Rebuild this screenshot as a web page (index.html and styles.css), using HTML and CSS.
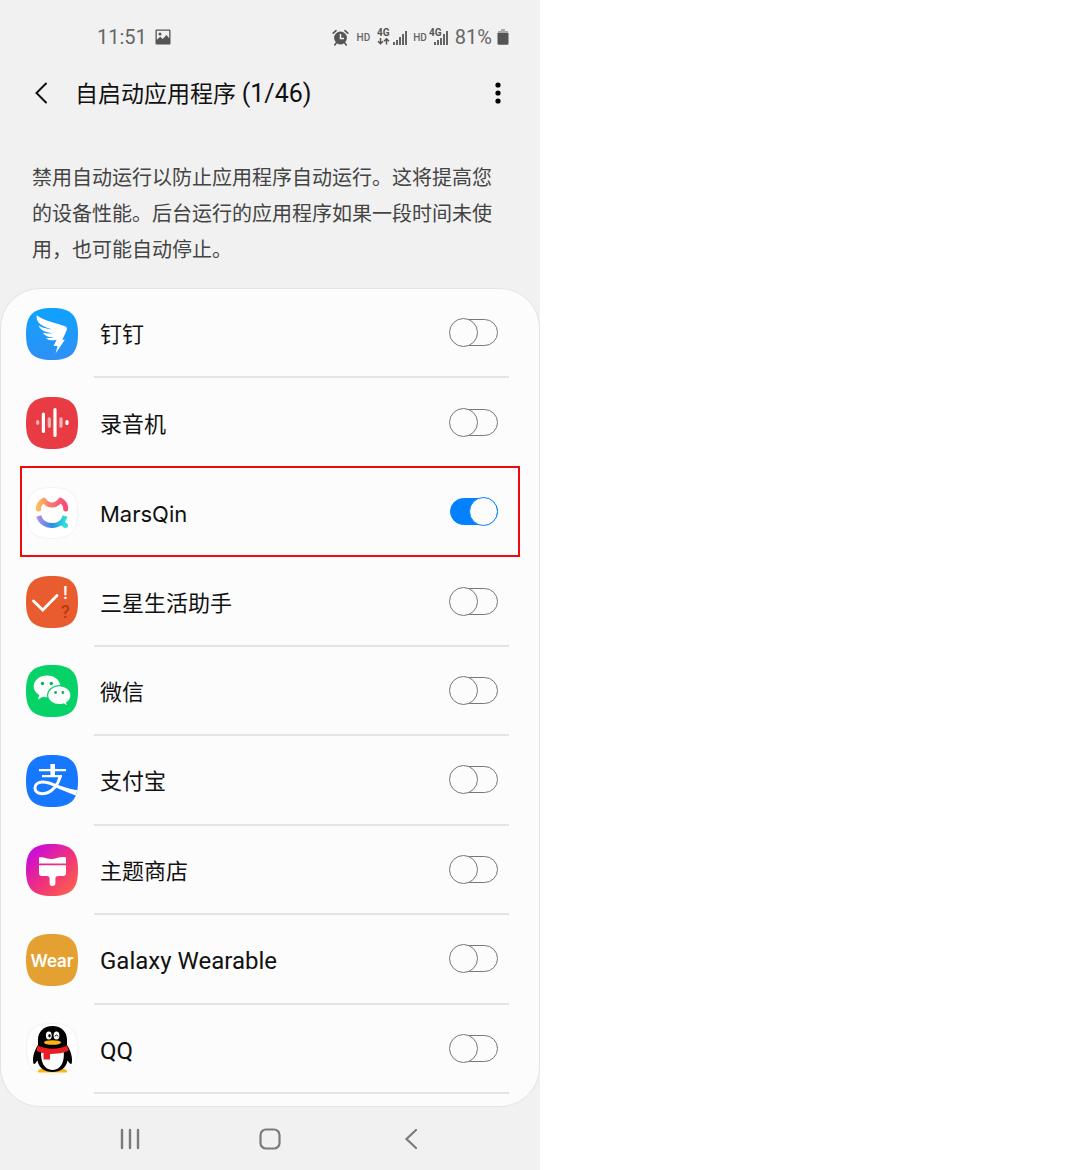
FILE: index.html
```
<!DOCTYPE html>
<html lang="zh-CN">
<head>
    <meta charset="UTF-8">
    <meta name="viewport" content="width=device-width, initial-scale=1.0">
    <title>自启动应用程序</title>
    <link rel="stylesheet" href="styles.css">
</head>
<body>
    <div class="phone">
        <div class="status">
            <span class="time">11:51</span>
            <svg class="picture" width="16" height="16" viewBox="0 0 16 16">
                <path fill="#555" fill-rule="evenodd" d="M1.5 0.5h13a1 1 0 0 1 1 1v13a1 1 0 0 1-1 1h-13a1 1 0 0 1-1-1v-13a1 1 0 0 1 1-1zM1.8 1.8v9l3.4-3 2.6 2.2 3.6-4 2.8 3.2V1.8z"/>
                <circle cx="5" cy="5" r="1.5" fill="#555"/>
            </svg>
            <div class="signals">
                <svg width="17" height="17" viewBox="0 0 17 17">
                    <circle cx="8.5" cy="9" r="6.4" fill="#555"/>
                    <path fill="none" stroke="#555" stroke-width="1.6" stroke-linecap="round" d="M1.2 4.2L4 1.6M13 1.6l2.8 2.6M4.2 14l-1.4 2M12.8 14l1.4 2"/>
                    <path fill="none" stroke="#f1f1f1" stroke-width="1.5" d="M8.5 5v4.4H12"/>
                </svg>
                <span class="hd">HD</span>
                <svg class="network" width="32" height="18" viewBox="0 0 32 18">
                    <text class="net" x="0" y="8">4G</text>
                    <path fill="none" stroke="#555" stroke-width="1.5" d="M3.5 10v5.5M1 13.2l2.5 2.5L6 13.2M9.5 16.5V11M7 13.2l2.5-2.5 2.5 2.5"/>
                    <path stroke="#555" stroke-width="1.8" d="M17 17v-3M20 17v-5M23 17v-8M26 17V6M29 17V3"/>
                </svg>
                <span class="hd">HD</span>
                <svg class="network" width="22" height="18" viewBox="0 0 22 18">
                    <text class="net" x="0" y="8">4G</text>
                    <path stroke="#555" stroke-width="1.8" d="M6 17v-3M9 17v-5M12 17v-7M15 17V6M18 17V3"/>
                </svg>
                <span class="percent">81%</span>
                <svg class="battery" width="12" height="16" viewBox="0 0 12 16">
                    <path fill="#aaa" d="M4 0h4v2h3v3H1V2h3z"/>
                    <path fill="#555" d="M0.5 4h11v10.5a1.3 1.3 0 0 1-1.3 1.3H1.8a1.3 1.3 0 0 1-1.3-1.3z"/>
                </svg>
            </div>
        </div>

        <header class="header">
            <button class="icon-button" aria-label="返回">
                <svg width="16" height="22" viewBox="0 0 16 22"><path fill="none" stroke="#111" stroke-width="2" stroke-linecap="round" d="M13 1.5L3.5 11l9.5 9.5"/></svg>
            </button>
            <h1>自启动应用程序 <span class="count">(1/46)</span></h1>
            <button class="icon-button" aria-label="更多选项">
                <svg width="16" height="22" viewBox="0 0 16 22"><circle cx="8" cy="3" r="2.6"/><circle cx="8" cy="11" r="2.6"/><circle cx="8" cy="19" r="2.6"/></svg>
            </button>
        </header>

        <p class="description">禁用自动运行以防止应用程序自动运行。这将提高您的设备性能。后台运行的应用程序如果一段时间未使用，也可能自动停止。</p>

        <ul class="apps">
            <li class="app">
                <svg class="logo" viewBox="0 0 52 52">
                    <defs><linearGradient id="ding" x2="0" y2="1"><stop stop-color="#0ea3ff"/><stop offset="1" stop-color="#2f8ff5"/></linearGradient></defs>
                    <path fill="url(#ding)" d="M26 0C45 0 52 7 52 26S45 52 26 52 0 45 0 26 7 0 26 0z"/>
                    <path fill="#fff" d="M10.700 7.200C18 13 31 15 39.500 18.500c1.600.7 1.800 2 1.200 3.500C39.800 24.500 38 28 36.300 31.800h2.500L29.600 45.500l2-7.500h-4l3-6.300c-4 1.100-8 1-10.800-1.600 2.500.2 5.500-.1 7.600-1-5 0-8.400-.8-10.600-4.600 3 1 7 1.300 9.900.8C20 24 14.500 22.500 12.600 17.400c4 2.600 9.400 3.600 14 4C18.500 18.700 9.600 16.500 10.700 7.200z"/>
                </svg>
                <div class="body"><label for="ding-switch">钉钉</label><input class="switch" type="checkbox" id="ding-switch"></div>
            </li>
            <li class="app">
                <svg class="logo" viewBox="0 0 52 52">
                    <path fill="#e93b43" d="M26 0C45 0 52 7 52 26S45 52 26 52 0 45 0 26 7 0 26 0z"/>
                    <g stroke="#fff" stroke-width="3.200" stroke-linecap="round">
                        <path d="M17.400 17v17.500M29 12.500v26M41 24.500v2"/>
                        <path stroke="#f8b4b7" d="M11.700 24.700v1.500M23.300 21.800v7.400M35 21.800v7.400"/>
                    </g>
                </svg>
                <div class="body"><label for="recorder-switch">录音机</label><input class="switch" type="checkbox" id="recorder-switch"></div>
            </li>
            <li class="app highlighted">
                <svg class="logo" viewBox="0 0 52 52">
                    <defs>
                        <linearGradient id="mars-top"><stop stop-color="#fdb95c"/><stop offset=".5" stop-color="#fb7077"/><stop offset="1" stop-color="#fa4a78"/></linearGradient>
                        <linearGradient id="mars-bottom"><stop stop-color="#a78bec"/><stop offset=".5" stop-color="#2c8fe0"/><stop offset="1" stop-color="#2cdfd8"/></linearGradient>
                    </defs>
                    <path fill="#fff" stroke="#f3f3f3" d="M26 .5C44.500 .5 51.500 7.500 51.500 26S44.500 51.500 26 51.500 .5 44.500 .5 26 7.500 .5 26 .5z"/>
                    <path fill="none" stroke="url(#mars-top)" stroke-width="5" stroke-linecap="round" stroke-linejoin="round" d="M12.500 22c0-4 2-7 5.300-8.800 2.500 3.500 4.700 4.800 8.200 4.800s5.700-1.300 8.400-4.800c3.300 1.800 5.300 4.800 5.300 8.800"/>
                    <path fill="none" stroke="url(#mars-bottom)" stroke-width="5" d="M12.800 29C14.500 35 19.500 38.500 26 38.500s11.500-3.500 13-9.500M34 34l5.500 4.500"/>
                    <circle cx="39.500" cy="38.500" r="2.500" fill="#2cdfd8"/>
                </svg>
                <div class="body"><label class="inter" for="mars-switch">MarsQin</label><input class="switch" type="checkbox" id="mars-switch" checked></div>
            </li>
            <li class="app">
                <svg class="logo" viewBox="0 0 52 52">
                    <path fill="#e95c2f" d="M26 0C45 0 52 7 52 26S45 52 26 52 0 45 0 26 7 0 26 0z"/>
                    <path fill="none" stroke="#fff" stroke-width="2.800" stroke-linecap="round" d="M7.500 25l9.300 9L31 19.500"/>
                    <text class="mark" x="37" y="23">!</text>
                    <text class="mark dark" x="35" y="42">?</text>
                </svg>
                <div class="body"><label for="life-switch">三星生活助手</label><input class="switch" type="checkbox" id="life-switch"></div>
            </li>
            <li class="app">
                <svg class="logo" viewBox="0 0 52 52">
                    <path fill="#07d267" d="M26 0C45 0 52 7 52 26S45 52 26 52 0 45 0 26 7 0 26 0z"/>
                    <path fill="#fff" d="M21 10.500c7.500 0 13.400 4.800 13.400 11S28.500 32.300 21 32.300c-1.500 0-2.900-.2-4.200-.6L12 34.500l1.200-4.500C9.700 28 7.700 25 7.700 21.500c0-6.200 5.800-11 13.300-11z"/>
                    <path fill="#fff" stroke="#07d267" stroke-width="1.200" d="M33.300 20.700c6.500 0 11.700 4.200 11.700 9.600 0 3-1.700 5.700-4.300 7.400l1 3.500-4.200-2.200c-1.300.4-2.700.6-4.200.6-6.500 0-11.700-4-11.700-9.300s5.200-9.600 11.700-9.600z"/>
                    <g fill="#07b659"><circle cx="16.500" cy="18.500" r="1.700"/><circle cx="25.300" cy="18.500" r="1.700"/><circle cx="29.600" cy="27.500" r="1.400"/><circle cx="36.900" cy="27.500" r="1.400"/></g>
                </svg>
                <div class="body"><label for="wechat-switch">微信</label><input class="switch" type="checkbox" id="wechat-switch"></div>
            </li>
            <li class="app">
                <svg class="logo" viewBox="0 0 52 52">
                    <path fill="#1677ff" d="M26 0C45 0 52 7 52 26S45 52 26 52 0 45 0 26 7 0 26 0z"/>
                    <path fill="none" stroke="#fff" stroke-width="2.200" d="M13 15.200h27M16 21.200h20"/>
                    <path fill="none" stroke="#fff" stroke-width="4.600" d="M26.700 9v12"/>
                    <path fill="none" stroke="#fff" stroke-width="3" d="M34.500 20.500C32.500 29 26 38.500 16.500 38.700 6.500 38.900 6.500 27.500 16 27c7-.3 14 4 19 6"/>
                    <path fill="#fff" d="M25 28.500c8 1.500 16 5 26.300 6.800-.3 2-.9 3.700-1.700 5.200C41 37.500 33 33.500 25 30z"/>
                </svg>
                <div class="body"><label for="alipay-switch">支付宝</label><input class="switch" type="checkbox" id="alipay-switch"></div>
            </li>
            <li class="app">
                <svg class="logo" viewBox="0 0 52 52">
                    <defs><linearGradient id="theme" x1="0" y1=".2" x2=".8" y2="1"><stop stop-color="#c80ae0"/><stop offset=".55" stop-color="#f0327a"/><stop offset="1" stop-color="#fd5f50"/></linearGradient></defs>
                    <path fill="url(#theme)" d="M26 0C45 0 52 7 52 26S45 52 26 52 0 45 0 26 7 0 26 0z"/>
                    <path fill="#fff" d="M13 13.500c5-1.200 8 2 13.500 1.500 5-.5 8-2.800 13.500-1.500v6H13z"/>
                    <path fill="#fff" d="M13 21.200h27V29a3 3 0 0 1-3 3h-5c-1.500 0-2.600 1-2.600 2.500V39a2.900 2.900 0 0 1-5.800 0v-4.500C23.600 33 22.500 32 21 32h-5a3 3 0 0 1-3-3z"/>
                </svg>
                <div class="body"><label for="theme-switch">主题商店</label><input class="switch" type="checkbox" id="theme-switch"></div>
            </li>
            <li class="app">
                <svg class="logo" viewBox="0 0 52 52">
                    <path fill="#e5a032" d="M26 0C45 0 52 7 52 26S45 52 26 52 0 45 0 26 7 0 26 0z"/>
                    <text class="wear" x="26" y="33" text-anchor="middle">Wear</text>
                </svg>
                <div class="body"><label class="latin" for="wear-switch">Galaxy Wearable</label><input class="switch" type="checkbox" id="wear-switch"></div>
            </li>
            <li class="app">
                <svg class="logo" viewBox="0 0 52 52">
                    <path fill="#fff" stroke="#f3f3f3" d="M26 .5C44.500 .5 51.500 7.500 51.500 26S44.500 51.500 26 51.500 .5 44.500 .5 26 7.500 .5 26 .5z"/>
                    <path fill="#fdb515" d="M12 48.500c0-2.300 4-3.300 8-3.300h13c4 0 8 1 8 3.300 0 .7-.8 1-2 1H14c-1.200 0-2-.3-2-1z"/>
                    <path d="M26.500 3C35.500 3 41 9 41 16.500V22c3.500 5 6 13 4.700 18.500-.8 1.200-2.500-.5-4.200-3C40.500 44.500 34.500 49 26.500 49s-14-4.500-15-11.500c-1.700 2.500-3.200 4.200-4.100 3C6 35 8.500 27 12 22v-5.500C12 9 17.500 3 26.500 3z"/>
                    <path fill="#fff" d="M15.500 27h22c1.700 11-2.500 20-11 20s-12.700-9-11-20z"/>
                    <path fill="#ea1c24" d="M12 22.500c8 4.200 21 4.200 29 0l1.700 5c-5 2.600-11.700 3.400-18.700 3.400V36.500h-6.500v-6.400c-2.500-.5-5-1.300-7.200-2.600z"/>
                    <ellipse cx="22.800" cy="12.500" rx="2.900" ry="3.900" fill="#fff"/><ellipse cx="30.500" cy="12.500" rx="2.900" ry="3.900" fill="#fff"/>
                    <ellipse cx="23.500" cy="12.700" rx="1.200" ry="1.800"/><path fill="none" stroke="#000" d="M29 13.500c.5-2 2.300-2 3 0"/>
                    <ellipse cx="26.500" cy="19.500" rx="8.500" ry="2.300" fill="#fdb515"/>
                </svg>
                <div class="body"><label class="latin" for="qq-switch">QQ</label><input class="switch" type="checkbox" id="qq-switch"></div>
            </li>
        </ul>

        <nav class="nav">
            <button class="icon-button" aria-label="最近"><svg width="22" height="22" viewBox="0 0 22 22"><path stroke="#7b7b7b" stroke-width="2.400" stroke-linecap="round" d="M3 2v18M11 2v18M19 2v18"/></svg></button>
            <button class="icon-button" aria-label="主页"><svg width="22" height="22" viewBox="0 0 22 22"><rect x="1.500" y="1.500" width="19" height="19" rx="5.500" fill="none" stroke="#7b7b7b" stroke-width="2.200"/></svg></button>
            <button class="icon-button" aria-label="返回上一页"><svg width="22" height="22" viewBox="0 0 22 22"><path fill="none" stroke="#7b7b7b" stroke-width="2.200" stroke-linecap="round" d="M17 2L7.500 11l9.500 9"/></svg></button>
        </nav>
    </div>
</body>
</html>
```
FILE: styles.css
```
*,
*::before,
*::after{
    box-sizing: border-box;
}
body{
    margin: 0;
    background-color: #fff;
    font-family: Roboto, "Noto Sans CJK SC", sans-serif;
    color: #111;
}
svg{
    display: block;
    flex-shrink: 0;
}
.phone{
    display: flex;
    flex-direction: column;
    width: 50%;
    max-width: 540px;
    min-height: 100vh;
    background-color: #f1f1f1;
}

/* status bar */
.status{
    display: flex;
    align-items: center;
    height: 74px;
    padding: 0 31px 0 97px;
    color: #666;
    font-size: 20px;
}
.picture{
    margin-left: 8px;
}
.signals{
    display: flex;
    align-items: center;
    margin-left: auto;
}
.hd{
    margin: 0 7px 0 8px;
    font-size: 10px;
    font-weight: 500;
}
.signals .hd + .network + .hd{
    margin: 0 2px 0 4px;
}
.net{
    font-size: 10px;
    font-weight: 700;
    fill: #555;
}
.percent{
    margin-left: 4px;
}
.battery{
    margin-left: 5px;
}

.icon-button{
    display: flex;
    align-items: center;
    justify-content: center;
    padding: 0;
    border: none;
    background: none;
    cursor: pointer;
}

/* title */
.header{
    display: flex;
    align-items: center;
    height: 38px;
    padding: 0 34px 0 33px;
}
h1{
    flex: 1;
    margin: 0 0 0 26px;
    padding-top: 2px;
    font-size: 23px;
    font-weight: 400;
    line-height: 36px;
}
.count{
    font-size: 25px;
}
.description{
    margin: 0;
    padding: 48px 32px 20px;
    color: #444;
    font-size: 20px;
    line-height: 36px;
}

/* app list */
.apps{
    display: flex;
    flex: 1;
    flex-direction: column;
    margin: 0;
    padding: 0 0 12px;
    list-style: none;
    background-color: #fcfcfc;
    border: 1px solid #e4e4e4;
    border-radius: 40px;
}
.app{
    position: relative;
    display: flex;
    flex: 1;
    gap: 16px;
    min-height: 72px;
    padding: 0 30px 0 25px;
}
.logo{
    align-self: center;
    width: 52px;
    height: 52px;
}
.body{
    display: flex;
    flex: 1;
    align-items: center;
    justify-content: space-between;
    padding: 0 11px 0 6px;
    border-bottom: 2px solid #e4e4e4;
    font-size: 22px;
    line-height: 32px;
}
.body label{
    padding-top: 5px;
}
.latin{
    font-size: 24px;
}
.inter{
    font-family: Inter, sans-serif;
}
.highlighted .body{
    border-color: transparent;
}
.highlighted::after{
    content: "";
    position: absolute;
    inset: -2px 19px 0;
    border: 2px solid #f00a0a;
    pointer-events: none;
}
.mark{
    fill: #fff;
    font-size: 18px;
    font-weight: 500;
}
.dark{
    fill: #b63b0a;
}
.wear{
    fill: #fff;
    font-family: Inter, sans-serif;
    font-size: 17px;
    font-weight: 600;
}

/* switch */
.switch{
    appearance: none;
    position: relative;
    width: 49px;
    height: 29px;
    margin: 0;
    cursor: pointer;
}
.switch::before,
.switch::after{
    content: "";
    position: absolute;
    border: 1px solid #777;
    background-color: #fcfcfc;
}
.switch::before{
    inset: 1px 0 1px 1px;
    border-radius: 14px;
}
.switch::after{
    top: 0;
    left: 0;
    width: 29px;
    height: 29px;
    border-radius: 50%;
}
.switch:checked::before{
    background-color: #0381fe;
    border-color: #0381fe;
}
.switch:checked::after{
    left: auto;
    right: 0;
    border-color: #0381fe;
}

.nav{
    display: grid;
    grid-template-columns: repeat(3, 1fr);
    height: 63px;
    padding: 0 60px;
}
```
